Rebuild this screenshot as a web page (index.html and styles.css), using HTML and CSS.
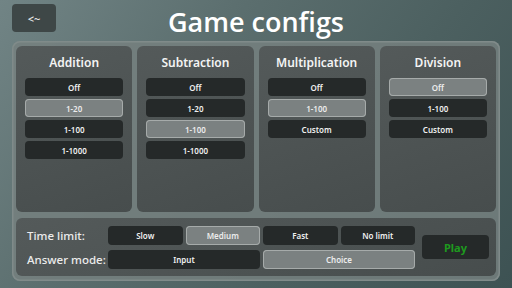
FILE: index.html
```html
<!DOCTYPE html>
<html lang="en">
<head>
  <meta charset="UTF-8">
  <title>Game configs</title>
  <link rel="stylesheet" href="styles.css">
</head>
<body>
  <div class="header">
    <button class="back">&lt;~</button>
    <h1>Game configs</h1>
    <div></div>
  </div>

  <div class="panel">
    <div class="columns">
      <div class="card">
        <h2>Addition</h2>
        <button class="opt">Off</button>
        <button class="opt on">1-20</button>
        <button class="opt">1-100</button>
        <button class="opt">1-1000</button>
      </div>
      <div class="card">
        <h2>Subtraction</h2>
        <button class="opt">Off</button>
        <button class="opt">1-20</button>
        <button class="opt on">1-100</button>
        <button class="opt">1-1000</button>
      </div>
      <div class="card">
        <h2>Multiplication</h2>
        <button class="opt">Off</button>
        <button class="opt on">1-100</button>
        <button class="opt">Custom</button>
      </div>
      <div class="card">
        <h2>Division</h2>
        <button class="opt on">Off</button>
        <button class="opt">1-100</button>
        <button class="opt">Custom</button>
      </div>
    </div>

    <div class="card bottom">
      <div class="settings">
        <span class="label">Time limit:</span>
        <div class="row four">
          <button class="opt">Slow</button>
          <button class="opt on">Medium</button>
          <button class="opt">Fast</button>
          <button class="opt">No limit</button>
        </div>
        <span class="label">Answer mode:</span>
        <div class="row two">
          <button class="opt">Input</button>
          <button class="opt on">Choice</button>
        </div>
      </div>
      <button class="play">Play</button>
    </div>
  </div>
</body>
</html>
```

FILE: styles.css
```css
body {
  margin: 0;
  width: 512px;
  height: 288px;
  overflow: hidden;
  font-family: 'Noto Sans', 'Open Sans', sans-serif;
  color: #f2f2f2;
  background: linear-gradient(125deg, #718485 0%, #5b6e6e 35%, #4c6060 65%, #3d5253 100%);
}

button {
  font-family: inherit;
  border: none;
  cursor: pointer;
}

.header {
  display: grid;
  grid-template-columns: 1fr auto 1fr;
  height: 41px;
}

.back {
  width: 44px;
  height: 28px;
  margin: 4px 0 0 12px;
  background: #3e4747;
  color: #e6e6e6;
  border-radius: 4px;
  font-size: 11px;
  font-weight: 600;
}

h1 {
  margin: 0;
  font-family: 'Open Sans', sans-serif;
  font-size: 27px;
  font-weight: 600;
  line-height: 43px;
  color: #ffffff;
}

.panel {
  margin: 0 12px;
  height: 240px;
  box-sizing: border-box;
  padding: 5px 4px 4px;
  background: rgba(118, 128, 127, 0.85);
  border-radius: 8px;
  box-shadow: inset 0 0 0 1.5px #808b8a;
}

.columns {
  display: grid;
  grid-template-columns: repeat(4, 1fr);
  gap: 5px;
}

.card {
  background: linear-gradient(160deg, #545a5a, #474d4d);
  border-radius: 6px;
}

.columns .card {
  height: 166px;
  display: flex;
  flex-direction: column;
  gap: 3px;
  padding: 0 9px;
}

h2 {
  margin: 9px 0 5px;
  font-size: 12px;
  font-weight: 600;
  line-height: 15px;
  text-align: center;
  color: #f4f4f4;
}

.opt {
  flex: none;
  height: 18px;
  background: #252929;
  color: #f0f0f0;
  border-radius: 4px;
  font-size: 8px;
  font-weight: 600;
  padding: 0;
}

.opt.on {
  background: #7b8181;
  box-shadow: inset 0 0 0 1px #a6abaa;
  color: #ececec;
}

.bottom {
  margin-top: 6px;
  height: 58px;
  display: flex;
  align-items: center;
  padding: 0 7px 0 11px;
}

.settings {
  display: grid;
  grid-template-columns: 81px 307px;
  row-gap: 5px;
  align-items: center;
}

.label {
  font-size: 11.5px;
  font-weight: 500;
  color: #ececec;
}

.row {
  display: grid;
  gap: 3px;
}

.row.four {
  grid-template-columns: repeat(4, 1fr);
}

.row.two {
  grid-template-columns: repeat(2, 1fr);
}

.row .opt {
  height: 19px;
}

.play {
  margin-left: 7px;
  width: 67px;
  height: 24px;
  background: #252929;
  color: #1e9a1e;
  border-radius: 4px;
  font-size: 11px;
  font-weight: 700;
}
```
